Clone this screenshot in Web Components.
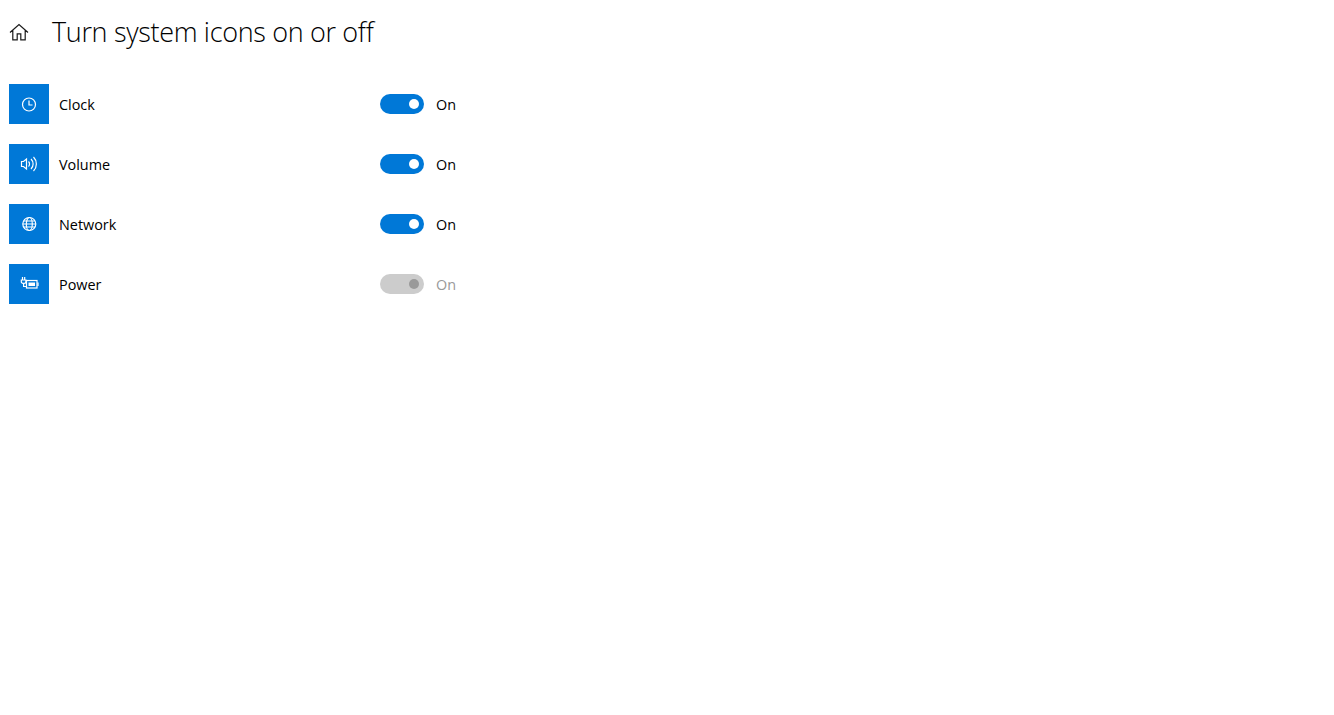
<!DOCTYPE html>
<html lang="en">
<head>
<meta charset="utf-8">
<title>Turn system icons on or off</title>
<style>
  html, body { margin: 0; background: #fff; }
  body { font-family: "Open Sans", "Noto Sans", sans-serif; color: #000; }
</style>
</head>
<body>
<settings-page>
  <span slot="title">Turn system icons on or off</span>
  <icon-row label="Clock" icon="clock"></icon-row>
  <icon-row label="Volume" icon="volume"></icon-row>
  <icon-row label="Network" icon="network"></icon-row>
  <icon-row label="Power" icon="power" disabled></icon-row>
</settings-page>

<script>
const ICONS = {
  clock: `<circle cx="10" cy="10.500" r="6.500"/><path d="M10 6.500v4.500h3.500"/>`,
  volume: `<path d="M2.500 7.500h2L7.500 5v10l-3-2.500h-2z"/><path d="M9.500 7.500a3.500 3.500 0 0 1 0 5"/><path d="M12 5a7 7 0 0 1 0 10"/><path d="M14.500 3a10 10 0 0 1 0 14"/>`,
  network: `<circle cx="10.300" cy="10" r="6.500"/><ellipse cx="10.300" cy="10" rx="3" ry="6.500"/><path d="M3.800 10h13M4.800 7h11M4.800 13h11"/>`,
  power: `<path d="M3.500 3v3M5.700 3v3M2.300 6h4.600v1.700a1.700 1.700 0 0 1-1.700 1.700H4a1.700 1.700 0 0 1-1.700-1.700zM4.600 9.500v3h2.900"/><rect x="7.500" y="6.500" width="10.500" height="7.500"/><path d="M19 8.500v3.500"/><path d="M9.500 8.500h6.500v3.500H9.500z" fill="#fff" stroke="none"/>`
}

class SettingsPage extends HTMLElement {
  constructor() {
    super()
    this.attachShadow({ mode: 'open' })
    this.shadowRoot.innerHTML = `
      <style>
        :host { display: block; padding: 0 0 0 9px; }
        header { display: flex; align-items: center; height: 64px; gap: 23px; }
        svg { width: 20px; height: 20px; flex: none; fill: none; stroke: #1a1a1a; stroke-width: 1.2; }
        h1 { margin: 0; font-size: 27px; letter-spacing: -0.33px; font-weight: 300; line-height: 36px; color: #000; white-space: nowrap; }
        main { display: flex; flex-direction: column; gap: 20px; padding-top: 20px; }
      </style>
      <header>
        <svg viewBox="0 0 20 20"><path d="M1 10.500 10 2.500l9 8M3.800 8.500v9.300h4.400v-6h3.600v6h4.400V8.500"/></svg>
        <h1><slot name="title"></slot></h1>
      </header>
      <main><slot></slot></main>
    `
  }
}

class IconRow extends HTMLElement {
  constructor() {
    super()
    this.attachShadow({ mode: 'open' })
  }

  connectedCallback() {
    const icon = ICONS[this.getAttribute('icon')]
    this.shadowRoot.innerHTML = `
      <style>
        :host { display: flex; align-items: center; height: 40px; font-size: 14.4px; }
        .tile { width: 40px; height: 40px; background: #0078d7; display: flex; align-items: center; justify-content: center; flex: none; }
        svg { width: 20px; height: 20px; fill: none; stroke: #fff; stroke-width: 1.2; }
        .label { margin-left: 10px; width: 321px; color: #000; }
      </style>
      <div class="tile"><svg viewBox="0 0 20 20">${icon}</svg></div>
      <span class="label">${this.getAttribute('label')}</span>
      <toggle-switch ${this.hasAttribute('disabled') ? 'disabled' : ''}></toggle-switch>
    `
  }
}

class ToggleSwitch extends HTMLElement {
  constructor() {
    super()
    this.attachShadow({ mode: 'open' })
    this.shadowRoot.innerHTML = `
      <style>
        :host { display: flex; align-items: center; gap: 12px; color: #000; }
        :host([disabled]) { color: #999; }
        .track { width: 44px; height: 20px; border-radius: 10px; background: #0078d7; display: flex; align-items: center; justify-content: flex-end; padding-right: 5px; box-sizing: border-box; }
        .knob { width: 10px; height: 10px; border-radius: 50%; background: #fff; }
        :host([disabled]) .track { background: #ccc; }
        :host([disabled]) .knob { background: #999; }
      </style>
      <div class="track"><div class="knob"></div></div>
      <span>On</span>
    `
  }
}

customElements.define('settings-page', SettingsPage)
customElements.define('icon-row', IconRow)
customElements.define('toggle-switch', ToggleSwitch)
</script>
</body>
</html>
